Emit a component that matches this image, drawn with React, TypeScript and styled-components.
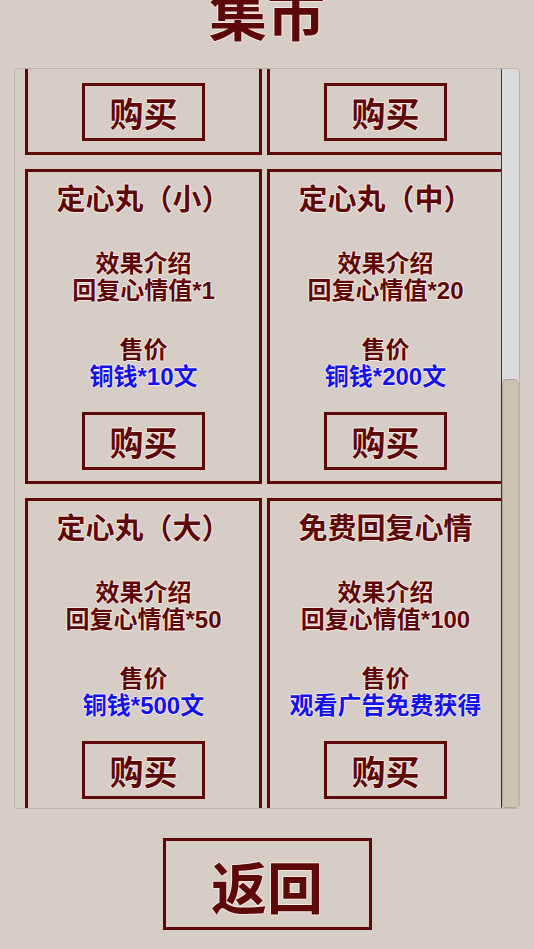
import { useLayoutEffect, useRef } from 'react';
import styled, { createGlobalStyle } from 'styled-components';

const GlobalStyle = createGlobalStyle`
  html, body {
    margin: 0;
    padding: 0;
    background-color: #d6cdc7;
  }
  * {
    box-sizing: border-box;
  }
`;

const ink = '#5e0909';
const halo = '#f6e9e4';
const outline = `-1px 0 0 ${halo}, 1px 0 0 ${halo}, 0 -1px 0 ${halo}, 0 1px 0 ${halo}`;

const Page = styled.div`
  display: flex;
  flex-direction: column;
  align-items: center;
  width: 534px;
  height: 949px;
  overflow: hidden;
  font-family: 'Liberation Sans', 'Noto Sans CJK SC', sans-serif;
  color: ${ink};
`;

const Title = styled.h1`
  margin: -13px 0 0;
  height: 58px;
  font-size: 58px;
  line-height: 58px;
  font-weight: 700;
  text-shadow: ${outline};
`;

const Panel = styled.div`
  position: relative;
  margin-top: 23px;
  width: 506px;
  height: 741px;
  border: 1px solid #b9b1ab;
  border-radius: 4px;
  overflow: hidden;
`;

const Scroller = styled.div`
  height: 100%;
  overflow-y: scroll;
  scrollbar-width: none;
  &::-webkit-scrollbar {
    display: none;
  }
`;

const Grid = styled.div`
  display: grid;
  grid-template-columns: 237px 237px;
  column-gap: 5px;
  row-gap: 14px;
  padding: 0 0 12px 10px;
`;

const Card = styled.div`
  display: flex;
  flex-direction: column;
  align-items: center;
  height: 315px;
  border: 3px solid ${ink};
  padding-top: 11px;
`;

const CardTitle = styled.div`
  font-size: 29px;
  line-height: 34px;
  font-weight: 700;
  white-space: nowrap;
  text-shadow: ${outline};
`;

const Block = styled.div<{ $gap: number }>`
  display: flex;
  flex-direction: column;
  align-items: center;
  margin-top: ${(p) => p.$gap}px;
`;

const Line = styled.div<{ $blue?: boolean }>`
  font-size: 24px;
  line-height: 27px;
  font-weight: 700;
  white-space: nowrap;
  color: ${(p) => (p.$blue ? '#1313e8' : ink)};
  text-shadow: ${outline};
`;

const BuyButton = styled.button`
  margin-top: 22px;
  width: 123px;
  height: 58px;
  border: 3px solid ${ink};
  background: transparent;
  font-family: inherit;
  font-size: 34px;
  font-weight: 700;
  color: ${ink};
  text-shadow: ${outline};
  padding: 0;
  cursor: pointer;
`;

const Track = styled.div`
  position: absolute;
  top: 0;
  right: 0;
  bottom: 0;
  width: 18px;
  background-color: #dcdbdb;
  border-left: 1px solid #3b3434;
  display: flex;
  flex-direction: column;
  justify-content: flex-end;
`;

const Thumb = styled.div`
  height: 429px;
  background-color: #cdc3b3;
  border: 1px solid #aaa39a;
  border-right-color: #bdb6ad;
  border-radius: 5px 5px 4px 4px;
`;

const BackButton = styled.button`
  margin-top: 29px;
  width: 209px;
  height: 92px;
  border: 3px solid ${ink};
  background: transparent;
  font-family: inherit;
  font-size: 56px;
  font-weight: 700;
  color: ${ink};
  text-shadow: ${outline};
  padding: 0;
  cursor: pointer;
`;

type Item = { name: string; effect: string; price: string };

const items: Item[] = [
  { name: '安神香（小）', effect: '回复心情值*5', price: '铜钱*50文' },
  { name: '安神香（大）', effect: '回复心情值*30', price: '铜钱*300文' },
  { name: '定心丸（小）', effect: '回复心情值*1', price: '铜钱*10文' },
  { name: '定心丸（中）', effect: '回复心情值*20', price: '铜钱*200文' },
  { name: '定心丸（大）', effect: '回复心情值*50', price: '铜钱*500文' },
  { name: '免费回复心情', effect: '回复心情值*100', price: '观看广告免费获得' },
];

const ShopCard = ({ item }: { item: Item }) => (
  <Card>
    <CardTitle>{item.name}</CardTitle>
    <Block $gap={33}>
      <Line>效果介绍</Line>
      <Line>{item.effect}</Line>
    </Block>
    <Block $gap={32}>
      <Line>售价</Line>
      <Line $blue>{item.price}</Line>
    </Block>
    <BuyButton>购买</BuyButton>
  </Card>
);

const App = () => {
  const scrollRef = useRef<HTMLDivElement>(null);

  useLayoutEffect(() => {
    if (scrollRef.current) scrollRef.current.scrollTop = 229;
  }, []);

  return (
    <Page>
      <GlobalStyle />
      <Title>集市</Title>
      <Panel>
        <Scroller ref={scrollRef}>
          <Grid>
            {items.map((item) => (
              <ShopCard key={item.name} item={item} />
            ))}
          </Grid>
        </Scroller>
        <Track>
          <Thumb />
        </Track>
      </Panel>
      <BackButton>返回</BackButton>
    </Page>
  );
};

export default App;
